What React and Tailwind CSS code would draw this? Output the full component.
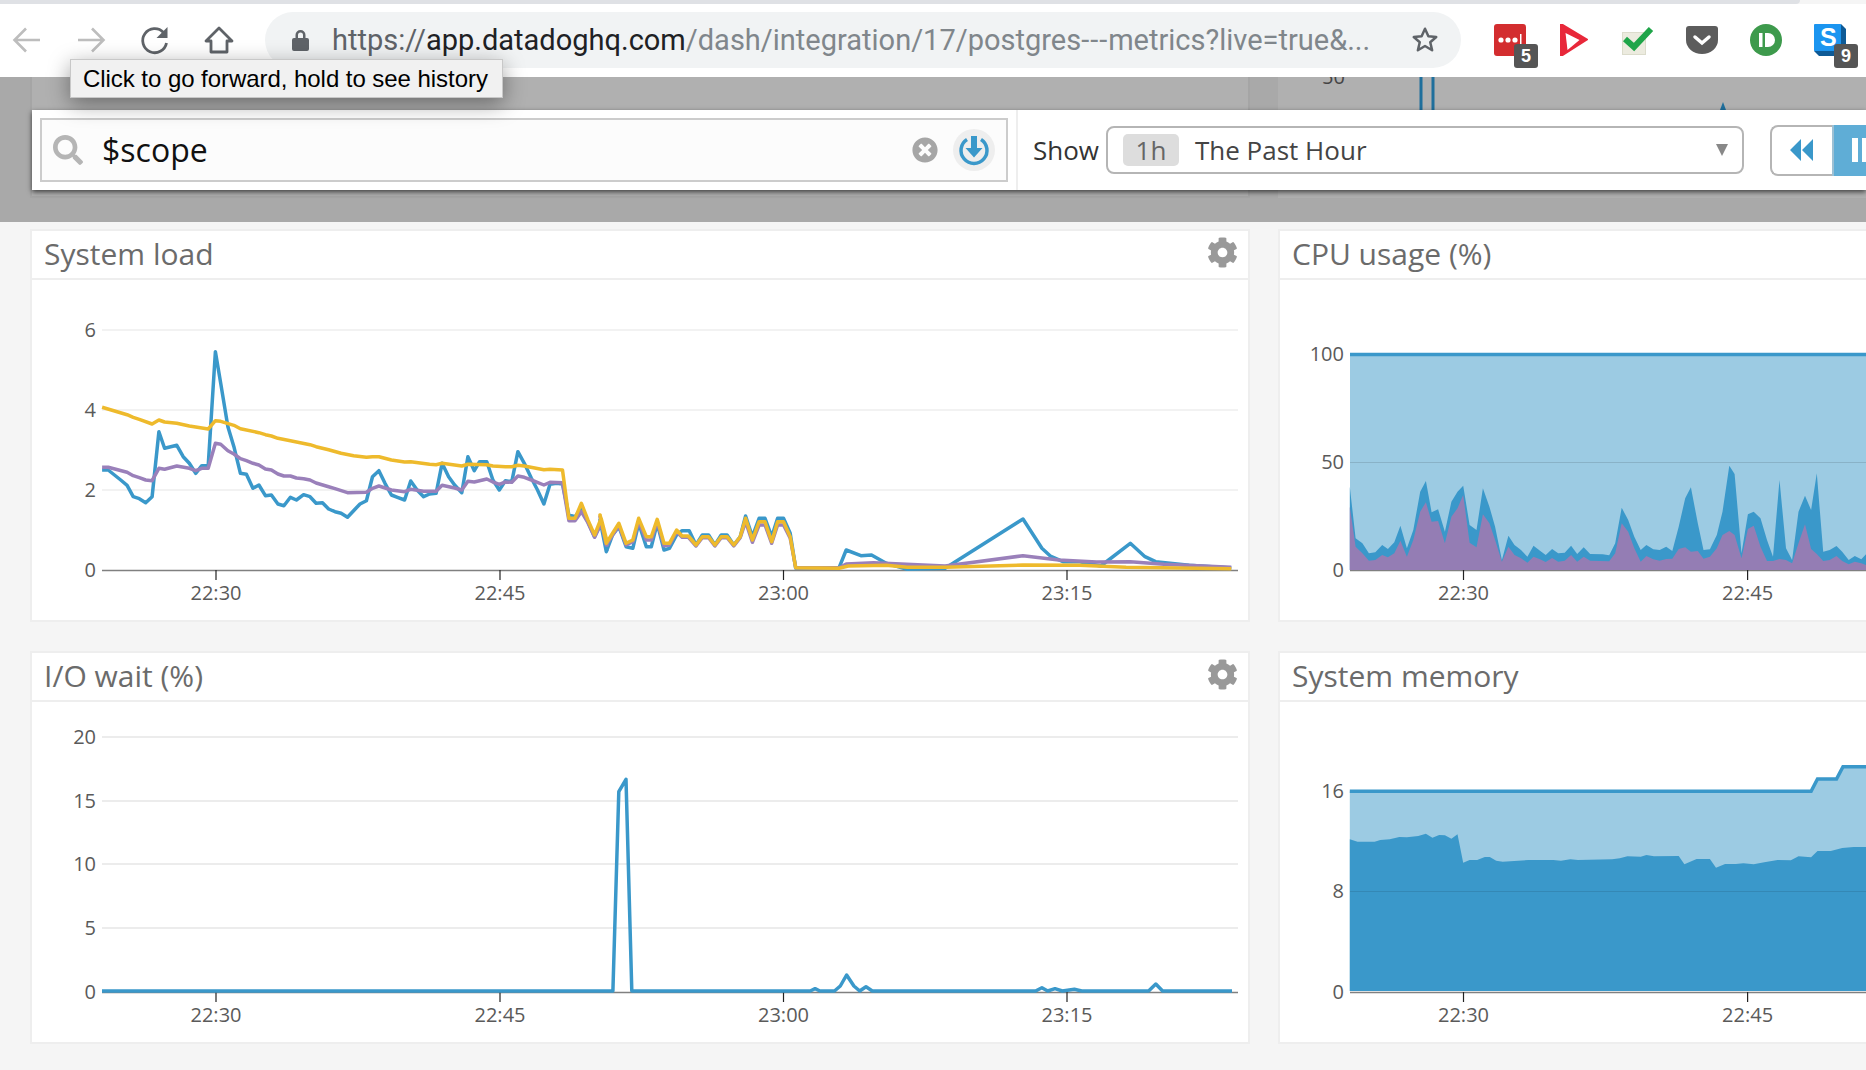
import { FaCog, FaSearch, FaTimesCircle } from 'react-icons/fa';

// points below were read off crops of the reference, so each chart has its own scale
const z3 = (pts) => pts.map(([x, y]) => [60 + x / 2.8, 300 + y / 3]);
const z4 = (pts) => pts.map(([x, y]) => [600 + x / 2.376, 380 + y / 3]);
const z5 = (pts) => pts.map(([x, y]) => [1270 + x / 2.63, 330 + y / 3]);
const z6 = (pts) => pts.map(([x, y]) => [1270 + x / 2.63, 740 + y / 3]);
const z7 = (pts) => pts.map(([x, y]) => [500 + x / 2.063, 760 + y / 3]);
const str = (pts) => pts.map(([x, y]) => `${x.toFixed(1)},${y.toFixed(1)}`).join(' ');
const BLUE = '#3a98ca';

const loadBlue = [
  ...z3([[118,510],[135,510],[170,540],[188,556],[205,590],[222,596],[240,608],[258,590],[277,395],[293,445],[327,436],[345,470],[362,490],[380,520],[397,497],[415,497],[435,155],[450,250],[470,380],[487,440],[505,520],[522,523],[540,565],[557,555],[575,587],[592,585],[610,612],[627,617],[645,592],[662,600],[682,584],[700,590],[717,610],[735,608],[752,627],[770,635],[787,640],[805,652],[822,632],[840,612],[858,602],[875,530],[893,512],[910,550],[928,585],[945,592],[965,600],[982,543],[1000,570],[1018,590],[1035,582],[1053,580],[1070,490],[1088,530],[1105,555],[1125,578],[1142,470],[1160,512],[1175,485],[1195,485],[1212,540],[1230,570],[1247,542],[1265,545],[1282,455],[1300,490],[1320,535],[1337,570],[1355,612],[1372,553],[1390,550],[1407,552],[1425,645],[1442,650],[1460,625],[1478,665],[1497,710],[1515,670],[1532,750]]),
  ...z4([[0,420],[15,515],[30,465],[45,440],[62,500],[78,505],[92,430],[110,500],[122,500],[136,430],[152,510],[165,505],[182,465],[195,452],[212,452],[228,495],[243,465],[258,465],[273,495],[288,465],[302,465],[318,495],[333,470],[346,408],[362,470],[378,415],[392,415],[408,470],[422,415],[436,415],[452,460],[465,565],[568,563],[585,510],[620,527],[645,525],[680,550],[730,568],[820,565],[1005,417],[1050,505],[1070,528],[1100,545],[1140,545],[1190,558],[1260,490],[1295,530],[1320,545],[1400,556],[1500,564]]),
];
const loadPurple = [
  ...z3([[118,502],[135,502],[188,517],[205,527],[222,533],[240,540],[258,542],[277,505],[293,508],[327,498],[362,505],[380,512],[397,505],[415,505],[435,430],[450,433],[470,452],[487,462],[505,476],[522,482],[540,490],[557,495],[575,507],[592,510],[610,522],[627,528],[645,528],[662,534],[682,536],[700,540],[717,549],[752,560],[770,566],[805,578],[858,577],[875,565],[893,558],[928,570],[965,575],[982,568],[1018,574],[1053,574],[1070,556],[1105,564],[1125,570],[1142,544],[1160,546],[1195,537],[1212,546],[1230,553],[1247,546],[1265,547],[1282,528],[1300,532],[1320,540],[1355,555],[1372,547],[1407,548],[1425,662],[1442,662],[1460,635],[1478,668],[1497,712],[1515,670],[1532,735]]),
  ...z4([[0,410],[15,495],[30,465],[45,437],[62,495],[78,485],[92,425],[110,480],[122,480],[136,425],[152,497],[165,495],[182,455],[195,472],[210,472],[228,498],[243,473],[258,473],[273,498],[288,473],[302,473],[318,498],[333,473],[346,425],[362,487],[378,435],[392,435],[408,490],[422,435],[436,435],[452,475],[465,563],[568,563],[585,552],[650,548],[820,558],[1005,527],[1090,540],[1180,546],[1260,545],[1340,553],[1500,562]]),
];
const loadYellow = [
  ...z3([[118,322],[188,344],[205,352],[222,358],[258,372],[277,360],[293,366],[327,370],[362,378],[380,381],[415,387],[435,362],[450,364],[487,376],[505,386],[557,398],[575,404],[592,408],[610,415],[645,422],[700,434],[717,440],[752,449],[787,460],[822,467],[858,472],[875,470],[893,470],[928,480],[965,486],[982,485],[1035,493],[1053,494],[1070,490],[1125,498],[1142,493],[1195,494],[1212,498],[1247,500],[1265,500],[1282,496],[1300,498],[1355,509],[1372,508],[1407,510],[1425,655],[1442,655],[1460,610],[1478,660],[1497,705],[1515,655],[1532,725]]),
  ...z4([[0,405],[15,490],[30,460],[45,430],[62,490],[78,480],[92,415],[110,470],[122,470],[136,418],[152,490],[165,490],[182,450],[195,468],[210,468],[228,495],[243,470],[258,470],[273,495],[288,470],[302,470],[318,495],[333,470],[346,415],[362,480],[378,425],[392,425],[408,485],[422,425],[436,425],[452,470],[465,563],[568,565],[590,558],[680,556],[730,562],[820,562],[1005,555],[1140,556],[1250,562],[1500,566]]),
];
const ioBlue = [
  [102, 991],
  ...z7([[233,693],[245,95],[260,58],[272,693],[640,693],[650,686],[660,693],[690,693],[702,678],[715,645],[730,678],[742,693],[755,680],[768,693],[1105,693],[1118,683],[1130,693],[1145,686],[1160,693],[1185,688],[1200,693],[1338,693],[1353,672],[1367,693],[1510,693]]),
];
const cpuBlue = z5([[210,470],[225,625],[243,640],[260,670],[277,667],[295,645],[310,657],[327,637],[343,587],[360,655],[377,600],[395,485],[410,453],[425,547],[442,538],[460,605],[477,515],[493,485],[508,467],[525,585],[543,600],[560,475],[577,530],[592,590],[610,690],[627,617],[643,645],[660,660],[677,680],[693,647],[710,662],[725,675],[742,657],[758,670],[775,668],[792,647],[808,672],[825,652],[842,672],[875,673],[892,676],[908,640],[925,533],[942,570],[958,620],[975,660],[990,645],[1008,658],[1025,660],[1042,650],[1058,663],[1075,590],[1092,505],[1107,472],[1125,580],[1140,660],[1157,658],[1175,615],[1190,545],[1208,407],[1222,432],[1240,670],[1257,553],[1272,545],[1290,565],[1307,630],[1323,680],[1340,450],[1357,655],[1373,690],[1390,545],[1407,497],[1423,540],[1438,430],[1455,665],[1472,660],[1490,648],[1505,665],[1522,690],[1538,678],[1555,688],[1568,672]]);
const cpuPurple = z5([[210,530],[225,650],[243,670],[260,692],[277,690],[295,675],[310,682],[327,670],[343,632],[360,680],[377,630],[395,545],[410,517],[425,575],[442,573],[460,640],[477,560],[493,535],[508,495],[525,638],[543,652],[560,553],[577,580],[592,630],[610,695],[627,650],[643,675],[660,685],[677,698],[693,680],[710,688],[725,696],[742,684],[758,695],[775,692],[792,675],[808,695],[825,680],[842,692],[892,694],[908,670],[925,580],[942,605],[958,655],[975,695],[990,678],[1008,688],[1025,692],[1042,687],[1058,686],[1075,657],[1092,652],[1107,665],[1125,663],[1140,686],[1157,680],[1175,655],[1190,615],[1208,603],[1222,615],[1240,685],[1257,597],[1272,587],[1290,650],[1307,693],[1323,693],[1340,687],[1357,690],[1373,700],[1390,640],[1407,583],[1423,657],[1438,672],[1455,693],[1472,690],[1490,678],[1505,693],[1522,703],[1538,695],[1555,700],[1568,705]]);
const memTop = z6([[210,154],[1423,154],[1440,117],[1490,117],[1507,80],[1568,80]]);
const memBlue = z6([[210,298],[230,305],[275,305],[290,300],[315,298],[340,291],[360,292],[390,288],[410,281],[427,293],[445,285],[460,286],[477,296],[493,283],[508,368],[525,360],[545,360],[565,351],[578,351],[595,362],[612,365],[680,360],[745,360],[765,362],[790,358],[810,360],[900,358],[920,355],[940,349],[975,350],[990,345],[1010,349],[1075,348],[1090,373],[1122,357],[1157,357],[1173,383],[1197,372],[1225,372],[1245,370],[1272,373],[1300,367],[1335,360],[1370,361],[1390,349],[1423,352],[1440,333],[1475,333],[1505,324],[1535,321],[1568,321]]);

const area = (pts, base) => str([[pts[0][0], base], ...pts, [pts[pts.length - 1][0], base]]);

function Axis({ x1, x2, grid, base, ticks, labelX, stroke = '#eeeeee' }) {
  return (
    <g fontFamily="'Open Sans', sans-serif" fontSize="20" fill="#5a5a5a">
      {grid.map(([y, label]) => (
        <g key={label}>
          {y !== base && <line x1={x1} x2={x2} y1={y} y2={y} stroke={stroke} strokeWidth="1.5" />}
          <text x={labelX} y={y + 6.5} textAnchor="end">{label}</text>
        </g>
      ))}
      <line x1={x1} x2={x2} y1={base + 0.5} y2={base + 0.5} stroke="#808080" strokeWidth="1.5" />
      {ticks.map(([x, label]) => (
        <g key={label}>
          <line x1={x} x2={x} y1={base} y2={base + 10} stroke="#222222" strokeWidth="1.2" />
          <text x={x} y={base + 30} textAnchor="middle">{label}</text>
        </g>
      ))}
    </g>
  );
}

const TICKS_L = [[216, '22:30'], [500, '22:45'], [783.5, '23:00'], [1067, '23:15']];
const TICKS_R = [[1463.5, '22:30'], [1747.6, '22:45']];

function Panel({ title, gear, box, children }) {
  return (
    <div className="h-[393px] flex flex-col bg-white border-2 border-[#eeeeee]">
      <div className="h-[49px] shrink-0 flex items-center justify-between pl-[12px] pr-[10px] border-b-2 border-[#eeeeee]">
        <span className="text-[30px] leading-[40px] mb-[1px] text-[#6b6b6b] font-['Open_Sans',sans-serif]">{title}</span>
        {gear && <FaCog className="text-[#999999] mb-[4px]" size={31} />}
      </div>
      <svg className="block" width="1216" height="339" viewBox={box}>{children}</svg>
    </div>
  );
}

function Badge({ n }) {
  return (
    <span className="absolute left-[20px] top-[20px] w-[24px] h-[24px] rounded-[3px] bg-[#555555] text-white text-[18px] font-bold flex items-center justify-center font-['Liberation_Sans',sans-serif]">{n}</span>
  );
}

function Chrome() {
  return (
    <div>
      <div className="h-[4px] w-[1800px] bg-[#dfe1e5] rounded-br-[8px]" />
      <div className="h-[73px] bg-white flex items-start pt-[8px] pl-[11px]">
        <div className="h-[56px] flex items-center gap-[32px]">
          <svg width="32" height="32" viewBox="0 0 32 32" fill="none" stroke="#bdbdbd" strokeWidth="2.6"><path d="M29 16H4M15 4.500 3.500 16 15 27.500" /></svg>
          <svg width="32" height="32" viewBox="0 0 32 32" fill="none" stroke="#bdbdbd" strokeWidth="2.6"><path d="M3 16h25M17 4.500 28.500 16 17 27.500" /></svg>
          <svg width="32" height="32" viewBox="0 0 32 32" fill="none"><path d="M24.500 8.500A12 12 0 1 0 27.500 19" stroke="#5f6368" strokeWidth="2.8" /><path d="M28.500 3v11h-11z" fill="#5f6368" /></svg>
          <svg width="32" height="32" viewBox="0 0 32 32" fill="none" stroke="#5f6368" strokeWidth="2.8"><path d="M16 4 3 17h5v11h16V17h5z" strokeLinejoin="round" /></svg>
        </div>
        <div className="ml-[30px] w-[1196px] h-[56px] rounded-[28px] bg-[#f1f3f4] flex items-center pl-[27px] pr-[21px]">
          <svg width="17" height="22" viewBox="0 0 17 22" fill="#5f6368"><path d="M3.500 9V6a5 5 0 0 1 10 0v3h1.500a2 2 0 0 1 2 2v9a2 2 0 0 1-2 2H2a2 2 0 0 1-2-2v-9a2 2 0 0 1 2-2zm2.500 0h5V6a2.500 2.500 0 0 0-5 0z" /></svg>
          <div className="ml-[23px] mt-[2px] flex-1 text-[29px] whitespace-nowrap font-['Roboto',sans-serif] text-[#80868b]">
            <span className="text-[#5f6368]">https://</span><span className="text-[#202124]">app.datadoghq.com</span>/dash/integration/17/postgres<span className="tracking-[1px]">---</span>metrics?live=true&amp;...
          </div>
          <svg width="30" height="30" viewBox="0 0 24 24" fill="none" stroke="#5f6368" strokeWidth="2"><path d="m12 3 2.700 6 6.300.6-4.800 4.200 1.500 6.400-5.700-3.400-5.700 3.400 1.500-6.400L3 9.600 9.300 9z" strokeLinejoin="round" /></svg>
        </div>
        <div className="ml-[33px] mt-[12px] flex gap-[32px]">
          <div className="relative w-[32px] h-[32px]">
            <svg width="32" height="32" viewBox="0 0 32 32"><rect width="32" height="32" rx="3" fill="#d32d2f" /><circle cx="7" cy="16" r="2.600" fill="#fff" /><circle cx="14" cy="16" r="2.600" fill="#fff" /><circle cx="21" cy="16" r="2.600" fill="#fff" /><rect x="26" y="10" width="1.500" height="11" fill="#fff" /></svg>
            <Badge n="5" />
          </div>
          <svg width="32" height="32" viewBox="0 0 32 32"><path d="M3 0 29 15.500 3 32z" fill="#e8283a" stroke="#e8283a" strokeLinejoin="round" strokeWidth="2" /><path d="M7.500 9 21.500 16 9.500 26z" fill="#fff" /></svg>
          <svg width="32" height="32" viewBox="0 0 32 32"><rect x="0.500" y="8.500" width="23" height="22" fill="#ecebdf" stroke="#dcdccc" /><path d="M3 15l9 8L29 5" fill="none" stroke="#1fa549" strokeWidth="6" /></svg>
          <svg width="32" height="32" viewBox="0 0 32 32"><path d="M0 5a3 3 0 0 1 3-3h26a3 3 0 0 1 3 3v11a16 14 0 0 1-32 0z" fill="#5c5c5c" /><path d="M9 13l7 6 7-6" fill="none" stroke="#fff" strokeWidth="3.500" strokeLinecap="round" /></svg>
          <svg width="32" height="32" viewBox="0 0 32 32"><circle cx="16" cy="16" r="16" fill="#3d9a4c" /><rect x="9" y="9" width="3.500" height="14" fill="#fff" /><path d="M15 9h3a7 7 0 0 1 0 14h-3z" fill="#fff" /></svg>
          <div className="relative w-[32px] h-[32px]">
            <svg width="32" height="32" viewBox="0 0 32 32"><path d="M27 0l5 5v27H5l-5-5z" fill="#0e5a96" /><rect width="27" height="27" rx="1" fill="#1b95f0" /></svg>
            <span className="absolute left-[6px] top-[-1px] text-white text-[25px] font-bold leading-[28px] font-['Liberation_Sans',sans-serif]">S</span>
            <Badge n="9" />
          </div>
        </div>
      </div>
    </div>
  );
}

function Toolbar() {
  return (
    <div className="absolute left-[32px] top-[33px] right-0 h-[80px] bg-white shadow-[0_2px_5px_rgba(0,0,0,0.65)] flex items-center pl-[8px] font-['Open_Sans',sans-serif]">
      <div className="w-[968px] shrink-0 h-[64px] border-2 border-[#cccccc] bg-[#fcfcfc] flex items-center pl-[11px] pr-[11px]">
        <FaSearch className="text-[#b5b5b5]" size={30} />
        <span className="ml-[19px] flex-1 text-[32px] text-[#111111]">$scope</span>
        <FaTimesCircle className="text-[#a6a6a6]" size={26} />
        <div className="ml-[15px] w-[42px] h-[42px] rounded-full bg-[#eeeeee] flex items-center justify-center">
          <svg width="32" height="32" viewBox="0 0 32 32" fill="none"><path d="M9 5.500A13 13 0 1 0 23 5.500" stroke={BLUE} strokeWidth="3.500" /><path d="M13 2h6v12h5.500L16 23.500 7.500 14H13z" fill={BLUE} /></svg>
        </div>
      </div>
      <div className="ml-[8px] w-[2px] h-full shrink-0 bg-[#eeeeee]" />
      <span className="ml-[15px] text-[26px] text-[#333333]">Show</span>
      <div className="ml-[7px] w-[638px] shrink-0 h-[48px] border-2 border-[#b5b5b5] rounded-[8px] flex items-center pl-[15px] pr-[14px]">
        <span className="w-[56px] h-[32px] rounded-[5px] bg-[#dddddd] text-[26px] text-[#666666] flex items-center justify-center">1h</span>
        <span className="ml-[16px] flex-1 text-[26px] text-[#444444]">The Past Hour</span>
        <span className="w-0 h-0 border-x-[6px] border-x-transparent border-t-[12px] border-t-[#888888]" />
      </div>
      <div className="ml-[26px] w-[62px] shrink-0 h-[51px] border-2 border-r-0 border-[#b5b5b5] rounded-l-[8px] flex items-center justify-center">
        <svg width="24" height="24" viewBox="0 0 24 24" fill={BLUE}><path d="M11 1v22L0 12zM23 1v22L12 12z" /></svg>
      </div>
      <div className="w-[60px] shrink-0 h-[51px] bg-[#5fadd6] border-l-2 border-[#9cc0d4] flex items-center pl-[18px] gap-[4px]">
        <span className="w-[6px] h-[24px] bg-white" />
        <span className="w-[6px] h-[24px] bg-white" />
      </div>
    </div>
  );
}

export default function App() {
  return (
    <div className="relative w-full h-[1070px] overflow-hidden bg-[#f5f5f5]">
      <Chrome />

      <div className="relative h-[145px] bg-[#a9a9a9]">
        <div className="flex pl-[30px] h-[121px]">
          <div className="w-[1220px] bg-[#b0b0b0] border-x-2 border-b-2 border-[#a5a5a5]" />
          <svg className="ml-[28px] flex-1 bg-[#b0b0b0] block" height="121" viewBox="0 0 588 121" preserveAspectRatio="xMinYMin">
            <text x="44" y="7" fontSize="20" fill="#444444" fontFamily="'Open Sans', sans-serif">50</text>
            <path d="M143 0v33M155 0v33" stroke="#1f6f9c" strokeWidth="3" />
            <path d="M442 33l3-8 3 8z" fill="#1f6f9c" />
          </svg>
        </div>
        <Toolbar />
      </div>

      <div className="grid grid-cols-[1220px_1220px] gap-x-[28px] gap-y-[29px] pl-[30px] pt-[7px]">
        <Panel title="System load" gear box="32 280 1216 339">
          <Axis x1={102} x2={1238} base={570} labelX={96} grid={[[330, '6'], [410, '4'], [490, '2'], [570, '0']]} ticks={TICKS_L} />
          <g fill="none" strokeWidth="3.5" strokeLinejoin="round">
            <polyline points={str(loadBlue)} stroke={BLUE} />
            <polyline points={str(loadPurple)} stroke="#9a80ba" />
            <polyline points={str(loadYellow)} stroke="#eeba2c" />
          </g>
        </Panel>
        <Panel title="CPU usage (%)" box="1280 280 1216 339">
          <Axis x1={1350} x2={2400} base={570} labelX={1344} grid={[[354, '100'], [462, '50'], [570, '0']]} ticks={TICKS_R} />
          <polygon points={area([[1350, 354], [1866, 354]], 570)} fill="#9ccbe3" />
          <polygon points={area(cpuBlue, 570)} fill={BLUE} />
          <polygon points={area(cpuPurple, 570)} fill="#947db4" />
          <line x1="1350" x2="1866" y1="462.500" y2="462.500" stroke="#000" strokeOpacity="0.12" />
          <line x1="1350" x2="1866" y1="354.500" y2="354.500" stroke={BLUE} strokeWidth="3.5" />
        </Panel>
        <Panel title="I/O wait (%)" gear box="32 702 1216 339">
          <Axis x1={102} x2={1238} base={992} labelX={96} stroke="#e6e6e6" grid={[[737, '20'], [801, '15'], [864, '10'], [928, '5'], [992, '0']]} ticks={TICKS_L} />
          <polyline points={str([...ioBlue, [1232, 991]])} fill="none" stroke={BLUE} strokeWidth="3.5" strokeLinejoin="round" />
        </Panel>
        <Panel title="System memory" box="1280 702 1216 339">
          <Axis x1={1350} x2={2400} base={992} labelX={1344} grid={[[791, '16'], [891, '8'], [992, '0']]} ticks={TICKS_R} />
          <polygon points={area(memTop, 991)} fill="#9ccbe3" />
          <polygon points={area(memBlue, 991)} fill={BLUE} />
          <line x1="1350" x2="1866" y1="891.500" y2="891.500" stroke="#000" strokeOpacity="0.1" />
          <polyline points={str(memTop)} fill="none" stroke={BLUE} strokeWidth="3.5" />
        </Panel>
      </div>

      <div className="absolute left-[70px] top-[59px] w-[433px] h-[39px] bg-[#f1f1f1] border border-[#c8c8c8] shadow-[0_6px_22px_rgba(0,0,0,0.4)] flex items-center pl-[12px] text-[24px] tracking-[-0.05px] text-black whitespace-nowrap font-['Liberation_Sans',sans-serif]">
        Click to go forward, hold to see history
      </div>
    </div>
  );
}
